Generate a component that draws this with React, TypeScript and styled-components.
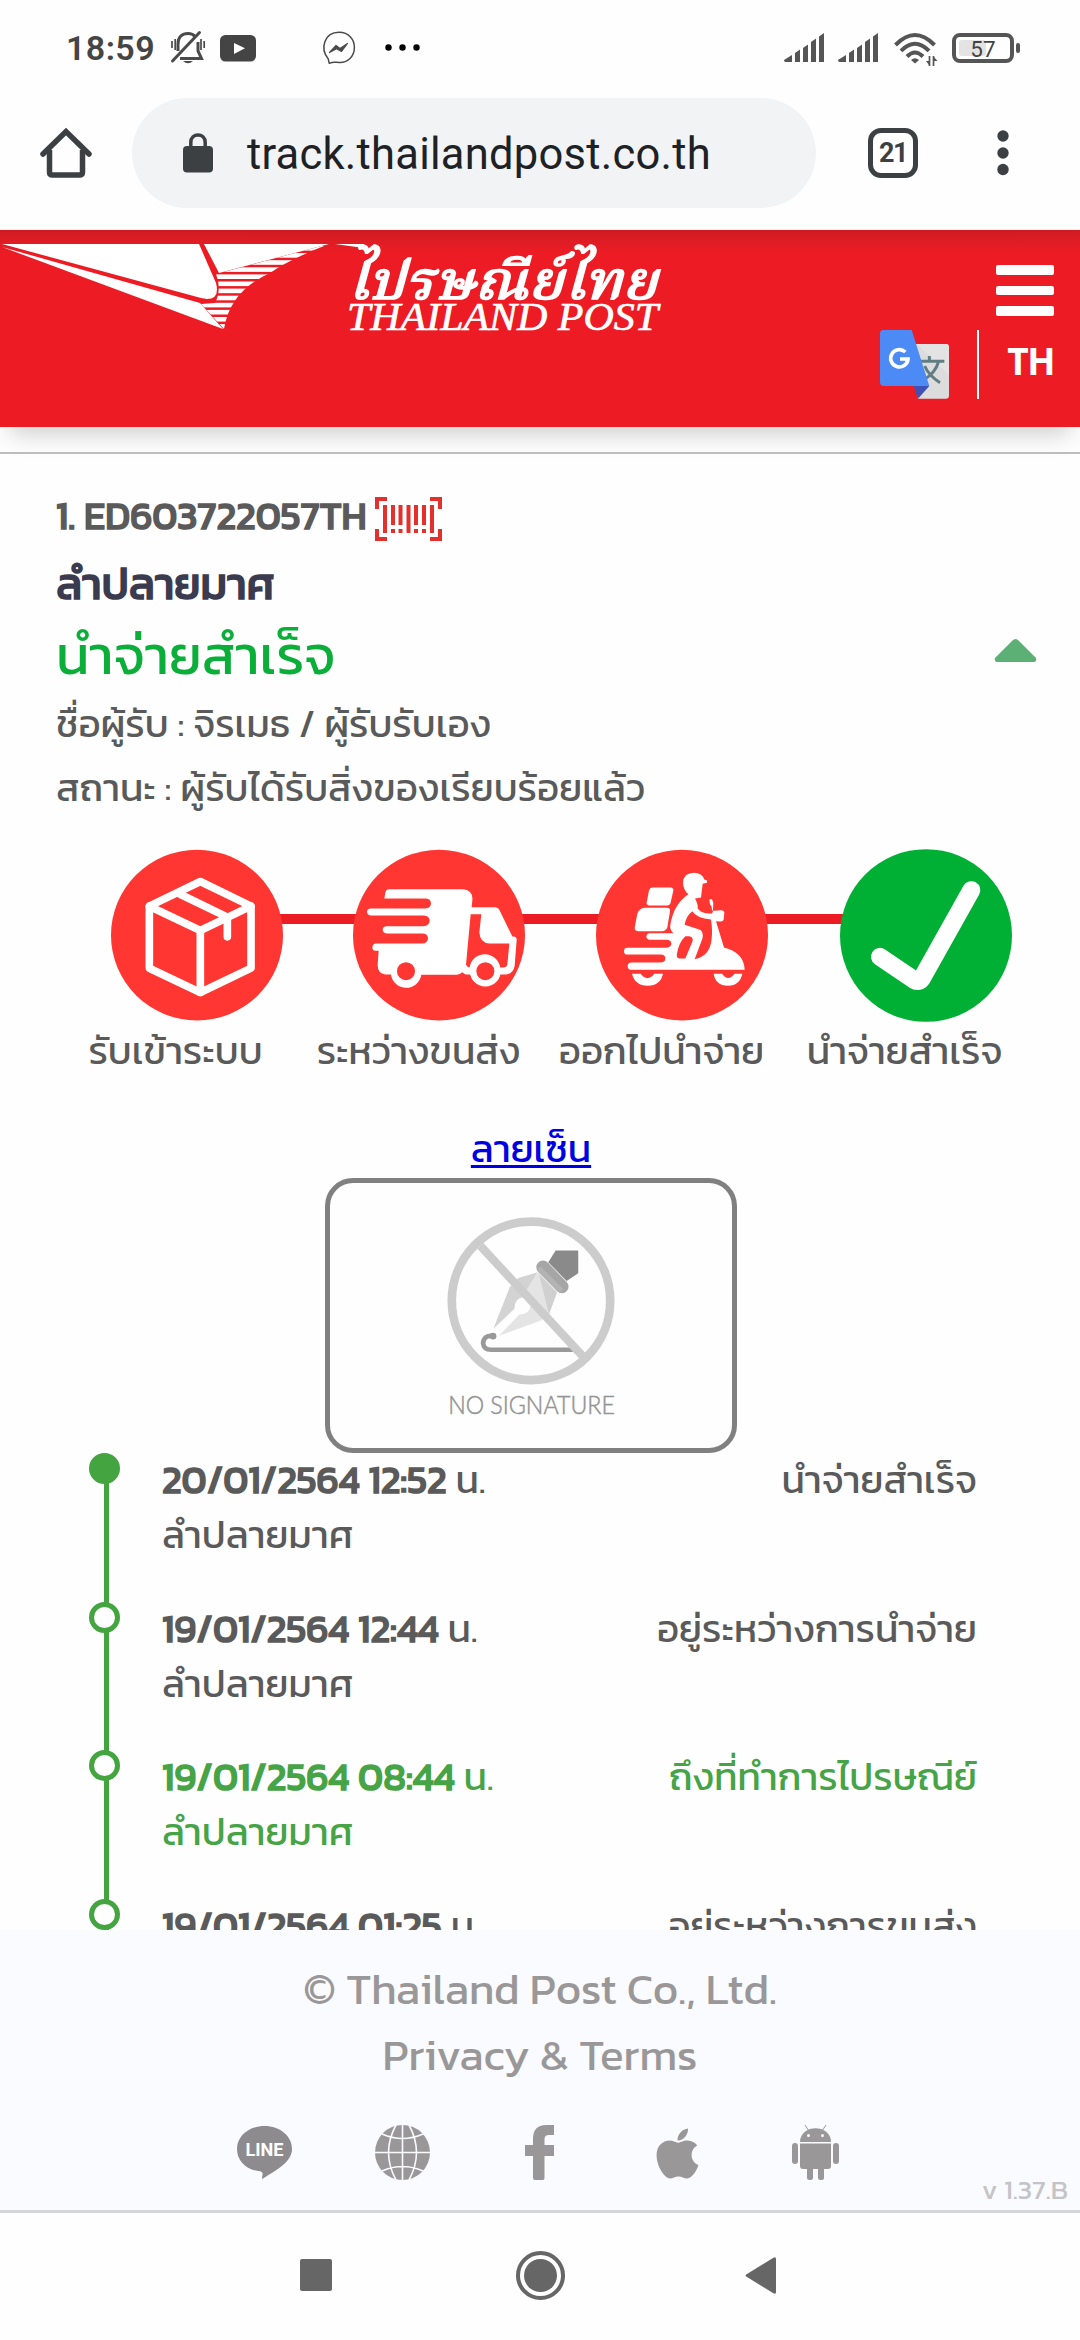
import React from "react";
import styled, { createGlobalStyle } from "styled-components";
import { FaApple } from "react-icons/fa";

const thai = `Kanit, Prompt, "Noto Sans Thai", "Noto Sans", sans-serif`;

const Global = createGlobalStyle`
  body { margin: 0; background: #fff; }
  * { box-sizing: border-box; }
  svg { display: block; flex: none; overflow: visible; }
`;

const Screen = styled.div`
  width: 1080px;
  height: 2340px;
  display: flex;
  flex-direction: column;
  overflow: hidden;
  background: #fefefe;
  color: #5a5a5a;
  font-family: ${thai};
`;

/* ---------- status bar ---------- */
const StatusBar = styled.div`
  height: 98px;
  flex: none;
  display: flex;
  align-items: flex-start;
  justify-content: space-between;
  padding: 31px 59px 0 66px;
`;
const Notifications = styled.div`
  display: flex;
  align-items: center;
  height: 34px;
`;
const Connectivity = styled.div`
  display: flex;
  align-items: flex-start;
  padding-top: 2px;
`;
const Clock = styled.div`
  width: 105px;
  font: 600 34px/34px Roboto, sans-serif;
  letter-spacing: 0.4px;
  color: #454545;
`;
const Gap = styled.div<{ $w: number }>`
  width: ${(p) => p.$w}px;
  flex: none;
`;

/* ---------- browser toolbar ---------- */
const Toolbar = styled.div`
  height: 132px;
  flex: none;
  display: flex;
  align-items: flex-start;
  border-bottom: 1px solid #ffe9ec;
  padding-left: 41px;
`;
const ToolIcon = styled.div<{ $w: number }>`
  width: ${(p) => p.$w}px;
  height: 110px;
  display: flex;
  align-items: center;
`;
const AddressPill = styled.div`
  width: 684px;
  height: 110px;
  border-radius: 55px;
  background: #f1f3f5;
  display: flex;
  align-items: center;
  padding-left: 51px;
  gap: 34px;
`;
const Address = styled.div`
  font: 400 43.5px/50px Roboto, sans-serif;
  color: #202124;
  letter-spacing: 0.25px;
  padding-top: 4px;
`;
const TabCount = styled.div`
  width: 50px;
  height: 50px;
  border: 5.5px solid #3c4043;
  border-radius: 13px;
  display: flex;
  align-items: center;
  justify-content: center;
  font: 700 27px/30px Roboto, sans-serif;
  letter-spacing: -1.6px;
  color: #3c4043;
`;

/* ---------- site header ---------- */
const SiteHeader = styled.header`
  height: 197px;
  flex: none;
  display: flex;
  justify-content: space-between;
  background: linear-gradient(#cf1b22 0, #e01c24 12px, #ed1c24 24px);
  box-shadow: 0 18px 22px -10px rgba(0, 0, 0, 0.18);
  padding-top: 13px;
`;
const HeaderTools = styled.div`
  width: 200px;
  padding: 22px 26px 0 0;
  display: flex;
  flex-direction: column;
  align-items: flex-end;
`;
const Burger = styled.div`
  display: flex;
  flex-direction: column;
  gap: 11px;
  height: 65px;
`;
const BurgerBar = styled.i`
  width: 58px;
  height: 9.7px;
  border-radius: 2px;
  background: #fff;
`;
const LangRow = styled.div`
  display: flex;
  align-items: flex-start;
`;
const LangDivider = styled.i`
  width: 2px;
  height: 69px;
  background: #fff;
  margin: 0 28px;
`;
const LangCode = styled.div`
  font: 700 37px/40px "Open Sans", sans-serif;
  color: #fff;
  letter-spacing: -1.5px;
  margin-top: 11px;
`;
const HeaderRule = styled.div`
  height: 27px;
  flex: none;
  border-bottom: 2px solid #bdbdbd;
`;

/* ---------- tracking summary ---------- */
const Main = styled.main`
  height: 1476px;
  flex: none;
  overflow: hidden;
`;
const Summary = styled.section`
  height: 390px;
  padding: 32px 43px 0 56px;
  display: flex;
  justify-content: space-between;
`;
const Line = styled.div<{
  $size: number;
  $h: number;
  $heavy?: boolean;
  $color?: string;
}>`
  font-size: ${(p) => p.$size}px;
  height: ${(p) => p.$h}px;
  line-height: ${(p) => p.$h}px;
  ${(p) => (p.$heavy ? "-webkit-text-stroke: 1.6px currentColor;" : "")}
  ${(p) => (p.$color ? `color: ${p.$color};` : "")}
  white-space: nowrap;
`;
const TrackingLine = styled(Line)`
  display: flex;
  align-items: center;
  gap: 8px;
  svg { margin-top: 6px; }
`;
const Toggle = styled.div`
  padding-top: 153px;
`;

/* ---------- progress ---------- */
const Steps = styled.div`
  display: flex;
  align-items: center;
  height: 182px;
  padding-left: 111px;
  svg { z-index: 1; }
`;
const Connector = styled.i<{ $w: number }>`
  width: ${(p) => p.$w + 6}px;
  height: 10px;
  margin: -32px -3px 0;
  background: #ec1c24;
`;
const StepLabels = styled.div`
  display: grid;
  grid-template-columns: repeat(4, 243px);
  padding-left: 54px;
  height: 100px;
`;
const StepLabel = styled.div`
  font-size: 38.5px;
  line-height: 50px;
  text-align: center;
  white-space: nowrap;
`;

/* ---------- signature ---------- */
const Signature = styled.section`
  display: flex;
  flex-direction: column;
  align-items: center;
  padding-right: 18px;
  height: 327px;
`;
const SignLink = styled.a`
  height: 52px;
  font-size: 38.5px;
  line-height: 45px;
  color: #0000e4;
  text-decoration: underline;
  text-decoration-thickness: 3px;
  text-underline-offset: 3px;
`;
const SignBox = styled.div`
  width: 412px;
  height: 275px;
  border: 5px solid #808080;
  border-radius: 28px;
  display: flex;
  justify-content: center;
  padding-top: 33px;
`;

/* ---------- timeline ---------- */
const Timeline = styled.ol`
  list-style: none;
  margin: 0;
  padding: 0 103px 0 89px;
`;
const Entry = styled.li<{ $green?: boolean }>`
  height: 148.7px;
  display: grid;
  grid-template-columns: 73px auto auto;
  justify-content: stretch;
  font-size: 38.5px;
  line-height: 55px;
  white-space: nowrap;
  color: ${(p) => (p.$green ? "#46a346" : "#5a5a5a")};
`;
const Rail = styled.div`
  width: 31px;
  display: flex;
  flex-direction: column;
  align-items: center;
`;
const Dot = styled.i<{ $filled?: boolean }>`
  width: 31px;
  height: 31px;
  flex: none;
  border-radius: 50%;
  border: 5px solid #43a440;
  background: ${(p) => (p.$filled ? "#43a440" : "#fff")};
`;
const RailLine = styled.i`
  width: 5px;
  flex: 1;
  margin: -1px 0 -1px 4px;
  background: #43a440;
`;
const When = styled.div`
  margin-top: -1px;
`;
const Stamp = styled.b`
  font-weight: 400;
  -webkit-text-stroke: 1.6px currentColor;
`;
const Event = styled.div`
  margin-top: -1px;
  text-align: right;
`;

/* ---------- footer ---------- */
const Footer = styled.footer`
  height: 280px;
  flex: none;
  background: #fafbfe;
  color: #9a9799;
  padding-top: 26px;
  display: flex;
  flex-direction: column;
  align-items: center;
`;
const FootText = styled.div`
  font-size: 44px;
  line-height: 66px;
`;
const Social = styled.div`
  width: 688px;
  margin-top: 37px;
  height: 57px;
  display: grid;
  grid-template-columns: repeat(5, 1fr);
  justify-items: center;
`;
const Version = styled.div`
  align-self: flex-end;
  font-size: 27.5px;
  line-height: 28px;
  padding-right: 12px;
  margin-top: -6px;
  color: #c4c4c7;
`;
const NavBar = styled.nav`
  height: 130px;
  flex: none;
  border-top: 3px solid #d4d5d8;
  display: flex;
  align-items: center;
  padding: 0 0 2px 300px;
`;

const gray = "#4a4a4a";

const BellOff = () => (
  <svg width="34" height="34" viewBox="0 0 34 34" fill="none" stroke={gray} strokeWidth="3">
    <path d="M7 20V13C7 6 11 2.500 17 2.500C20 2.500 22.500 3.500 24 5.500" />
    <path d="M27 11V20L30.500 27.500H9" />
    <path d="M1.500 30L28.500 1.500" strokeLinecap="round" />
    <path d="M12 30H22Q17 34.500 12 30Z" fill={gray} stroke="none" />
    <path d="M1 10V17M4.200 8V19M30 8V19M33.200 10V17" strokeWidth="1.700" />
  </svg>
);
const YouTube = () => (
  <svg width="36" height="27" viewBox="0 0 36 27">
    <rect width="36" height="26.500" rx="5.500" fill="#444" />
    <path d="M14 8L25 13.300L14 19Z" fill="#fff" />
  </svg>
);
const Messenger = () => (
  <svg width="34" height="34" viewBox="0 0 34 34">
    <path d="M6 27.500C-2 18 2 1.300 17 1.300C27 1.300 32.400 8.500 32.400 16.500C32.400 26 25 32 17 31.500C14 31.500 11 30.500 7.500 32.300C6.500 32 7.200 29.500 6 27.500Z" fill="none" stroke={gray} strokeWidth="1.500" />
    <path d="M7.500 21.500L14 14.500L18 17.500L25.500 12.500L19.500 20.500L14.500 17.800Z" fill={gray} stroke={gray} strokeWidth="1.200" strokeLinejoin="round" />
  </svg>
);
const Dots = () => (
  <svg width="36" height="8" viewBox="0 0 36 8">
    {[3.5, 17.5, 31.5].map((x) => <circle key={x} cx={x} cy="3.500" r="3.200" />)}
  </svg>
);
const Signal = () => (
  <svg width="41" height="30" viewBox="0 0 41 30" fill="#555">
    <path d="M0 27L8 22V29H1.500Q0 29 0 27Z" />
    <path d="M11 20L16 16.500V29H11Z" />
    <path d="M19 15L24 11.500V29H19Z" />
    <path d="M27 9L32 5.500V29H27Z" />
    <path d="M35 3.500L40 0V29H35Z" />
  </svg>
);
const Wifi = () => (
  <svg width="44" height="35" viewBox="0 0 44 35" fill="none" stroke="#555" strokeWidth="4">
    <path d="M1.500 12Q21 -8 40.500 12M7 17.800Q21 3.500 35 17.800M13 23.500Q21 15.500 29 23.500" />
    <path d="M17 27Q21 23.500 25 27L21 30.500Z" fill="#555" stroke="none" />
    <path d="M35.500 23V33M39.500 23V33" strokeWidth="1.700" />
    <path d="M32 28L35 32V28ZM40 24L43.500 28H40Z" fill="#555" stroke="none" />
  </svg>
);
const Battery = () => (
  <svg width="69" height="31" viewBox="0 0 69 31">
    <rect x="2" y="2" width="58" height="26" rx="6" fill="#fff" stroke="#555" strokeWidth="4" />
    <rect x="7" y="7" width="27" height="16" rx="3" fill="#e3e3e3" />
    <rect x="64" y="10" width="4" height="10" rx="2" fill="#555" />
    <text x="31" y="23.500" fontSize="22.500" textAnchor="middle" fontFamily="Roboto, sans-serif" fill="#444">57</text>
  </svg>
);
const Home = () => (
  <svg width="50" height="50" viewBox="0 0 50 50" fill="none" stroke="#3c4043" strokeWidth="5.500">
    <path d="M8.500 22V44Q8.500 47 11.500 47H38.500Q41.500 47 41.500 44V22" />
    <path d="M2 26L25 3.500L48 26" strokeLinejoin="miter" strokeLinecap="round" />
  </svg>
);
const Lock = () => (
  <svg width="30" height="40" viewBox="0 0 30 40">
    <rect y="13" width="30" height="26.500" rx="4" fill="#3c4043" />
    <path d="M7.800 14V9.500C7.800 -0.500 22.200 -0.500 22.200 9.500V14" fill="none" stroke="#3c4043" strokeWidth="3.500" />
  </svg>
);
const Kebab = () => (
  <svg width="12" height="46" viewBox="0 0 12 46" fill="#3c4043">
    <circle cx="6" cy="6" r="5.700" /><circle cx="6" cy="23" r="5.700" /><circle cx="6" cy="39.500" r="5.700" />
  </svg>
);

const stripes = Array.from({ length: 13 }, (_, i) => 3 + i * 7.1);

const Logo = () => (
  <svg width="680" height="92" viewBox="0 0 680 92">
    <defs>
      <clipPath id="wing">
        <path d="M329 1L216 31Q222 46 215 60L201 61L224 86Q230 48 270 30Q290 16 329 1Z" />
      </clipPath>
    </defs>
    <g fill="#fff">
      <path d="M2 1H199L216 40Q220 56 207 56L201 55Z" />
      <path d="M2 4L200 60L223 86Z" />
      <path d="M204 1H329L219 30Z" />
      <g clipPath="url(#wing)">
        {stripes.map((y) => <rect key={y} x="195" y={y} width="140" height="4.600" />)}
      </g>
      <path d="M335 1H364V5Z" />
      <text x="347" y="56" textLength="310" lengthAdjust="spacingAndGlyphs" fontSize="53" fontStyle="italic" fontWeight="500" fontFamily='"Noto Serif Thai", "Liberation Serif", serif' stroke="#fff" strokeWidth="1.500">ไปรษณีย์ไทย</text>
      <text x="347" y="86.500" textLength="311" lengthAdjust="spacingAndGlyphs" fontSize="39" fontStyle="italic" fontFamily='"Liberation Serif", serif' stroke="#fff" strokeWidth="0.700">THAILAND POST</text>
    </g>
  </svg>
);

const Translate = () => (
  <svg width="69" height="69" viewBox="0 0 207 207">
    <path d="M90 42H197Q207 42 207 52V197Q207 206 197 206H114Z" fill="#dcdcdc" />
    <path d="M110 42L207 135V52Q207 42 197 42Z" fill="#e3e3e3" />
    <path d="M120 94H193M148 78V94M176 94Q166 130 130 150M134 108Q146 136 180 158" fill="none" stroke="#607d82" strokeWidth="9" />
    <path d="M101 168H148L114 206Z" fill="#3f51b5" />
    <path d="M10 0H95L148 168H12Q0 168 0 156V12Q0 0 10 0Z" fill="#4c8bf5" />
    <path d="M76 66A26 26 0 1 0 84 87H60" fill="none" stroke="#fff" strokeWidth="11" />
  </svg>
);

const Barcode = () => (
  <svg width="67" height="44" viewBox="0 0 67 44" fill="none" stroke="#e3302d" strokeWidth="4">
    <path d="M2 12V2H12M55 2H65V12M2 32V42H12M55 42H65V32" />
    <path d="M10 8V36M33.500 8V36M57 8V36" />
    <path d="M18 8V28M25.500 8V28M41 8V28M49 8V28M18 32V36M25.500 32V36M41 32V36M49 32V36" />
  </svg>
);

const BoxStep = () => (
  <svg width="172" height="171" viewBox="153 59 516 512">
    <ellipse cx="411" cy="314" rx="258" ry="256" fill="#ff3631" />
    <g fill="none" stroke="#fff" strokeWidth="23" strokeLinejoin="round" strokeLinecap="round">
      <path d="M421 153L573 227V413L421 486L268 413V227Z" />
      <path d="M268 227L421 300L573 227M421 300V486M362 192L502 260V319" />
    </g>
  </svg>
);
const TruckStep = () => (
  <svg width="172" height="171" viewBox="879 59 516 512">
    <ellipse cx="1137" cy="314" rx="258" ry="256" fill="#ff3631" />
    <path fill="#fff" d="M973 204L976 186Q978 176 988 176H1208Q1240 178 1237 210L1235 230H1306Q1314 230 1318 238L1357 318Q1370 316 1370 328L1364 406Q1360 430 1338 432H1320A46 46 0 0 1 1231 432H1218Q1212 430 1207 425Q1200 432 1190 433H1084A46 46 0 0 1 993 432H976Q952 428 953 402L956 361H946Q937 360 937 350Q938 340 948 339H1086Q1104 338 1104 323Q1103 309 1088 309H980Q968 308 968 297Q969 287 980 287H1090Q1109 286 1109 270Q1108 256 1092 255H932Q921 254 921 244Q922 234 932 234H1096Q1113 232 1113 218Q1112 205 1098 204Z" />
    <path fill="#ff3631" d="M1232 251H1264L1258 306Q1260 337 1288 339H1348L1342 402Q1340 411 1330 411H1320A46 46 0 0 0 1229 410Q1222 412 1218 403Z" />
    <circle cx="1038" cy="422" r="27" fill="#ff3631" />
    <circle cx="1276" cy="422" r="46" fill="#fff" />
    <circle cx="1276" cy="422" r="27" fill="#ff3631" />
  </svg>
);
const ScooterStep = () => (
  <svg width="172" height="171" viewBox="108 59 516 512">
    <ellipse cx="366" cy="314" rx="258" ry="256" fill="#ff3631" />
    <g fill="#fff">
      <path d="M278 171H332Q341 172 340 180L332 216Q330 225 320 225H268Q259 224 260 216L267 180Q270 171 278 171Z" />
      <path d="M254 232H320Q331 232 330 242L322 290Q318 301 306 302H234Q223 301 224 292L232 250Q238 233 254 232Z" />
      <path d="M369 158Q370 127 402 127Q426 128 433 147L441 150V157L428 160L423 201L405 204Q414 220 413 233Q424 251 456 249L460 241L485 239Q493 240 493 246L491 268Q489 274 480 273L468 272L492 351Q552 366 554 418H215Q203 418 203 407Q203 396 215 396H300Q316 396 316 384Q316 372 302 372H202Q192 372 192 362Q192 352 202 352H316Q334 351 334 340Q334 329 320 328H270Q259 327 259 318Q260 308 270 308H340Q328 298 331 283Q340 222 385 191Q370 178 369 158Z" />
      <path d="M448 208Q456 200 460 218L459 240H456L455 229Q448 222 448 208Z" />
      <path d="M216 430H242Q262 456 283 430H309Q302 465 263 466Q224 465 216 430Z" />
      <path d="M461 430H486Q504 455 524 430H547Q540 465 504 466Q466 465 461 430Z" />
    </g>
    <path fill="#ff3631" d="M397 242Q410 263 453 267Q458 300 455 325Q450 378 404 386L427 325Q432 306 420 298L374 283Q378 256 397 242Z" />
    <path fill="#ff3631" d="M376 317H388Q402 320 397 334L376 384H358Q348 382 351 370Q356 336 376 317Z" />
  </svg>
);
const DoneStep = () => (
  <svg width="172" height="173" viewBox="840 54 516 518">
    <ellipse cx="1098" cy="313" rx="258" ry="259" fill="#00b035" />
    <path d="M960 377L1062 446Q1076 455 1086 441L1234 177" fill="none" stroke="#fff" strokeWidth="54" strokeLinecap="round" strokeLinejoin="round" />
  </svg>
);

const NoSignature = () => (
  <svg width="172" height="213" viewBox="432 316 516 640">
    <path d="M764 420H832V488L797 511L742 455Z" fill="#8a8a8a" />
    <path d="M710 485L652 502L626 530L577 655L640 595Q640 565 665 560Z" fill="#d3d3d3" />
    <path d="M710 485L768 545L744 612L720 630L594 676L655 612Q690 610 688 582L665 558Z" fill="#e4e4e4" />
    <path d="M714 490L768 545L744 612Z" fill="#d0d0d0" />
    <path d="M726 470L783 528" stroke="#a6a6a6" strokeWidth="40" strokeLinecap="round" />
    <path d="M718 478L776 536" stroke="#b3b3b3" strokeWidth="16" strokeLinecap="round" />
    <path d="M577 677Q548 672 546 698Q548 718 570 718H820" fill="none" stroke="#999" strokeWidth="14" />
    <circle cx="576" cy="677" r="10" fill="#999" />
    <path d="M538 406L846 738" stroke="#ccc" strokeWidth="25" />
    <circle cx="690" cy="571" r="238" fill="none" stroke="#ccc" strokeWidth="26" />
    <text x="441" y="911" fontSize="75" fontWeight="300" textLength="501" lengthAdjust="spacingAndGlyphs" fontFamily="Lato, sans-serif" fill="#949494" stroke="#949494" strokeWidth="1.500">NO SIGNATURE</text>
  </svg>
);

const foot = "#9a9799";
const LineIcon = () => (
  <svg width="55" height="55" viewBox="0 0 55 55">
    <path d="M27.500 1C43 1 55 11 55 24C55 36 42 44 25 54C25 50 28 46.500 21 46C8 44 0 35 0 24C0 11 12 1 27.500 1Z" fill="#8e8b8e" />
    <text x="8.500" y="31" fontSize="19" fontWeight="700" textLength="38" lengthAdjust="spacingAndGlyphs" fontFamily="Roboto, sans-serif" fill="#fff">LINE</text>
  </svg>
);
const GlobeIcon = () => (
  <svg width="55" height="55" viewBox="0 0 55 55">
    <circle cx="27.500" cy="27.500" r="27.500" fill={foot} />
    <g fill="none" stroke="#fafbfe" strokeWidth="1.600">
      <path d="M0 27.500H55M27.500 0V55M7 9Q27.500 18 48 9M7 46Q27.500 37 48 46M21 0Q6 27.500 21 55M34 0Q49 27.500 34 55" />
    </g>
  </svg>
);
const FacebookIcon = () => (
  <svg width="29" height="55" viewBox="0 0 29 55">
    <path d="M29 0V10H24Q19.500 10 19.500 14V20H29V31H19.500V53Q19.500 55 18 55H10Q8 55 8 53V31H0V20H8V14Q8 0 21 0Z" fill={foot} />
  </svg>
);
const AndroidIcon = () => (
  <svg width="47" height="55" viewBox="0 0 47 55" fill={foot}>
    <path d="M8 17C8 -1.500 39 -1.500 39 17Z" />
    <path d="M13 0L17 6M34 0L30 6" stroke={foot} strokeWidth="1" />
    <rect x="0" y="18" width="6" height="21" rx="3" />
    <rect x="41" y="18" width="6" height="21" rx="3" />
    <path d="M8 18.500H39V41Q39 44 36 44H11Q8 44 8 41Z" />
    <rect x="15" y="40" width="6" height="15" rx="2.500" />
    <rect x="26" y="40" width="6" height="15" rx="2.500" />
    <circle cx="16.500" cy="10.500" r="1.500" fill="#fafbfe" />
    <circle cx="30.500" cy="10.500" r="1.500" fill="#fafbfe" />
  </svg>
);

const labels = ["รับเข้าระบบ", "ระหว่างขนส่ง", "ออกไปนำจ่าย", "นำจ่ายสำเร็จ"];

const entries = [
  { at: "20/01/2564 12:52", event: "นำจ่ายสำเร็จ", filled: true },
  { at: "19/01/2564 12:44", event: "อยู่ระหว่างการนำจ่าย" },
  { at: "19/01/2564 08:44", event: "ถึงที่ทำการไปรษณีย์", green: true },
  { at: "19/01/2564 01:25", event: "อยู่ระหว่างการขนส่ง" },
];

export default function App() {
  return (
    <Screen>
      <Global />
      <StatusBar>
        <Notifications>
          <Clock>18:59</Clock>
          <BellOff />
          <Gap $w={15} />
          <YouTube />
          <Gap $w={66} />
          <Messenger />
          <Gap $w={29} />
          <Dots />
        </Notifications>
        <Connectivity>
          <Signal />
          <Gap $w={13} />
          <Signal />
          <Gap $w={15} />
          <Wifi />
          <Gap $w={14} />
          <Battery />
        </Connectivity>
      </StatusBar>
      <Toolbar>
        <ToolIcon $w={91}><Home /></ToolIcon>
        <AddressPill>
          <Lock />
          <Address>track.thailandpost.co.th</Address>
        </AddressPill>
        <Gap $w={52} />
        <ToolIcon $w={129}><TabCount>21</TabCount></ToolIcon>
        <ToolIcon $w={12}><Kebab /></ToolIcon>
      </Toolbar>

      <SiteHeader>
        <Logo />
        <HeaderTools>
          <Burger><BurgerBar /><BurgerBar /><BurgerBar /></Burger>
          <LangRow>
            <Translate />
            <LangDivider />
            <LangCode>TH</LangCode>
          </LangRow>
        </HeaderTools>
      </SiteHeader>
      <HeaderRule />

      <Main>
        <Summary>
          <div>
            <TrackingLine $size={38.5} $h={60} $heavy>
              1. ED603722057TH
              <Barcode />
            </TrackingLine>
            <Line $size={44} $h={75} $heavy $color="#3b3b4f">ลำปลายมาศ</Line>
            <Line $size={55} $h={68} $color="#0cae3a">นำจ่ายสำเร็จ</Line>
            <Line $size={38.5} $h={70}>ชื่อผู้รับ : จิรเมธ / ผู้รับรับเอง</Line>
            <Line $size={38.5} $h={57}>สถานะ : ผู้รับได้รับสิ่งของเรียบร้อยแล้ว</Line>
          </div>
          <Toggle>
            <svg width="43" height="23" viewBox="0 0 43 23"><path d="M21.500 0Q23 0 24.500 1.500L42 19Q43 23 39 23H4Q0 23 1 19L18.500 1.500Q20 0 21.500 0Z" fill="#5db075" /></svg>
          </Toggle>
        </Summary>
        <Steps>
          <BoxStep />
          <Connector $w={70} />
          <TruckStep />
          <Connector $w={71} />
          <ScooterStep />
          <Connector $w={72} />
          <DoneStep />
        </Steps>
        <StepLabels>
          {labels.map((label) => <StepLabel key={label}>{label}</StepLabel>)}
        </StepLabels>
        <Signature>
          <SignLink>ลายเซ็น</SignLink>
          <SignBox><NoSignature /></SignBox>
        </Signature>
        <Timeline>
          {entries.map((e) => (
            <Entry key={e.at} $green={e.green}>
              <Rail><Dot $filled={e.filled} /><RailLine /></Rail>
              <When>
                <Stamp>{e.at}</Stamp> น.
                <br />
                ลำปลายมาศ
              </When>
              <Event>{e.event}</Event>
            </Entry>
          ))}
        </Timeline>
      </Main>

      <Footer>
        <FootText>© Thailand Post Co., Ltd.</FootText>
        <FootText>Privacy &amp; Terms</FootText>
        <Social>
          <LineIcon />
          <GlobeIcon />
          <FacebookIcon />
          <FaApple size={57} color={foot} />
          <AndroidIcon />
        </Social>
        <Version>v 1.37.B</Version>
      </Footer>
      <NavBar>
        <svg width="476" height="50" viewBox="300 2251 476 50" fill="#666">
          <rect x="300" y="2259" width="32" height="32" rx="2" />
          <circle cx="540.500" cy="2275.500" r="22.500" fill="none" stroke="#666" strokeWidth="4" />
          <circle cx="540.500" cy="2275.500" r="16.500" />
          <path d="M776 2259V2292Q776 2295 773 2293L747 2277Q744 2275.500 747 2274L773 2258Q776 2256 776 2259Z" />
        </svg>
      </NavBar>
    </Screen>
  );
}
